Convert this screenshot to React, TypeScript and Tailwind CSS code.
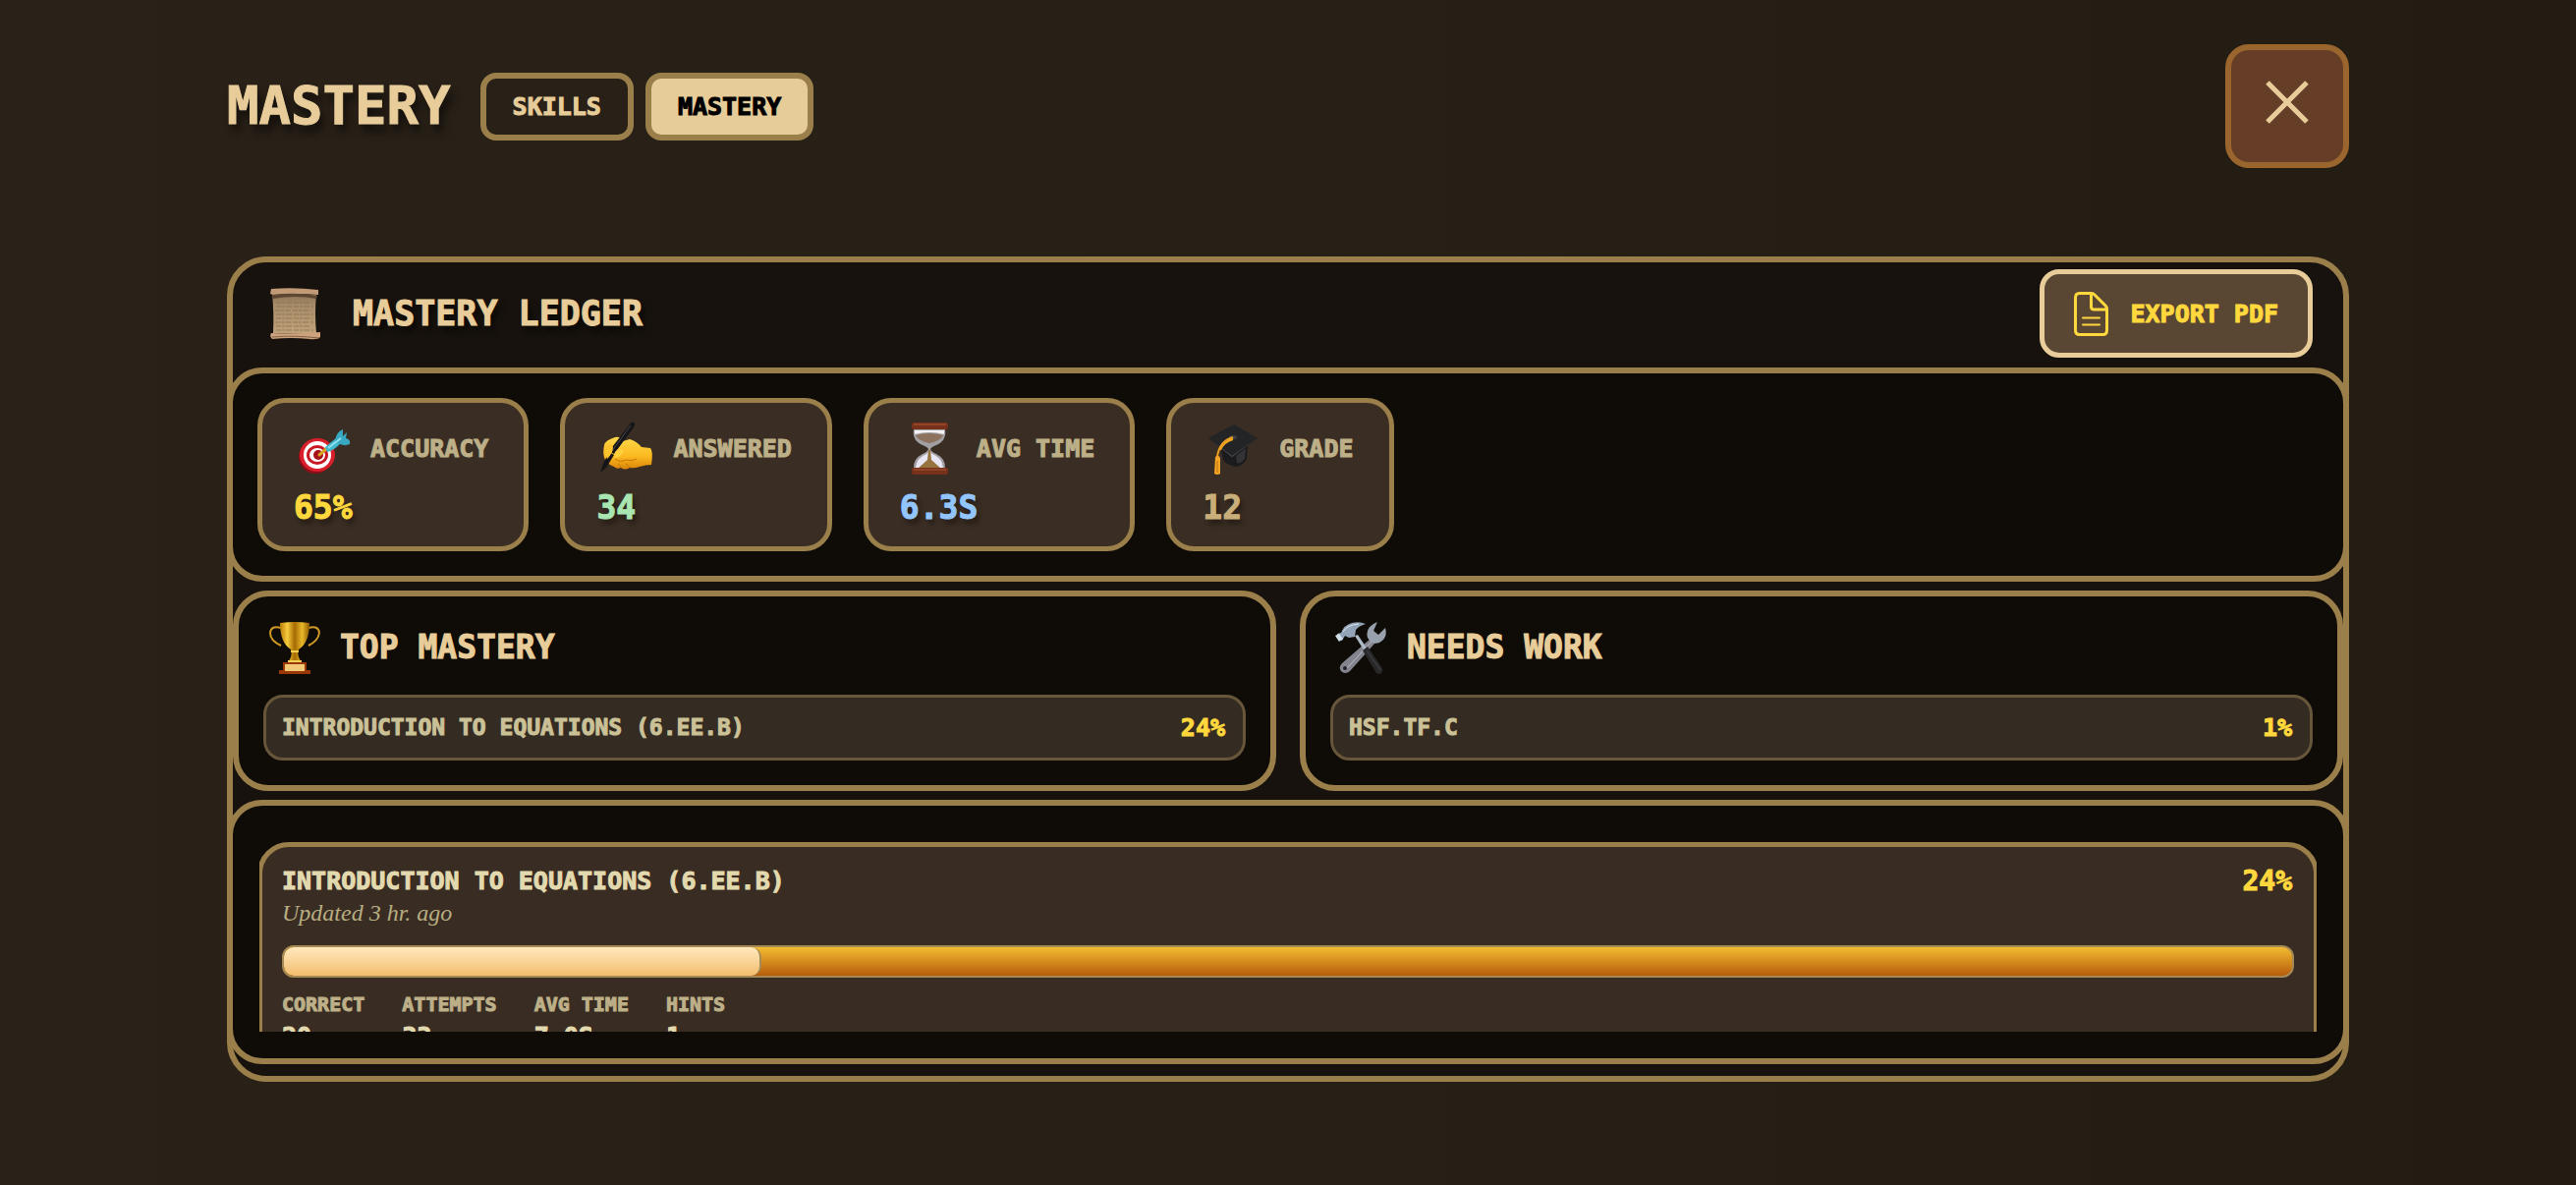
import React, { useState } from 'react';

const pixelFont = "font-['DejaVu_Sans_Mono',monospace] font-bold uppercase [-webkit-text-stroke:1px_currentColor]";
const panel = 'border-[6px] border-[#9b7f4a] bg-[#0f0c08]';

const ScrollIcon = () => (
  <svg viewBox="0 0 58 54" className="h-[54px] w-[58px] shrink-0" aria-hidden="true">
    <defs>
      <linearGradient id="parchment" x1="0" y1="0" x2="0" y2="1">
        <stop offset="0" stopColor="#8d7355" />
        <stop offset="0.3" stopColor="#a88d6a" />
        <stop offset="1" stopColor="#c0a27a" />
      </linearGradient>
    </defs>
    <path d="M6 7 L51 8 Q49 26 51 47 L7 47 Q8 26 6 7Z" fill="url(#parchment)" />
    <path d="M5 2 Q28 0 53 3 V8 Q30 6 7 8 L4 7Z" fill="#c39a76" />
    <path d="M6 8 Q30 5 52 9 L51 12 Q30 8 7 12Z" fill="#5e4732" />
    <path d="M5 47 Q30 48 55 46 V51 Q52 54 44 53 Q25 51 6 53 Q3 50 5 47Z" fill="#cda27c" />
    <path d="M6 51 Q28 49 54 52" stroke="#81614a" fill="none" />
    <g stroke="#7d6547" strokeWidth="1" strokeDasharray="5 1 3 1 6 2" opacity="0.6">
      <path d="M10 16H47M10 20H48M9 24H46M10 28H48M10 32H47M9 36H48M10 40H46M10 44H48" />
    </g>
  </svg>
);

const TargetIcon = () => (
  <svg viewBox="0 0 58 54" className="h-[54px] w-[58px] shrink-0" aria-hidden="true">
    <ellipse cx="22" cy="36" rx="17" ry="17" fill="#8f0d16" />
    <ellipse cx="24" cy="34" rx="18" ry="17" fill="#d81f2b" />
    <ellipse cx="24" cy="34" rx="14" ry="14" fill="#fff" />
    <ellipse cx="24" cy="34" rx="11" ry="10" fill="#c91724" />
    <ellipse cx="24" cy="34" rx="8" ry="7" fill="#fff" />
    <ellipse cx="25" cy="34" rx="5" ry="5" fill="#a51219" />
    <path d="M26 34 L34 27" stroke="#d6a420" strokeWidth="3" strokeLinecap="round" />
    <path d="M32 26 L43 17 L49 20 Q43 29 34 31Z" fill="#3fb7cf" />
    <path d="M42 19 Q44 10 50 8 L50 15 L54 11 L53 17 Q58 18 57 23 Q50 26 43 21Z" fill="#38a9c2" />
    <path d="M35 27 L48 17" stroke="#8fe0ec" strokeWidth="2" />
  </svg>
);

const WritingIcon = () => (
  <svg viewBox="0 0 58 54" className="h-[54px] w-[58px] shrink-0" aria-hidden="true">
    <defs>
      <linearGradient id="hand" x1="0" y1="0" x2="0" y2="1">
        <stop offset="0" stopColor="#ffd84a" />
        <stop offset="0.6" stopColor="#fbb91f" />
        <stop offset="1" stopColor="#d98408" />
      </linearGradient>
    </defs>
    <path
      d="M8 24 Q9 19 19 16 Q25 15 27 20 L34 18 Q41 20 46 26 L55 27 Q58 30 56 44 Q50 44 44 46 Q38 48 34 47 Q29 50 25 47 Q21 49 18 46 Q12 44 9 39 Q6 33 8 24Z"
      fill="url(#hand)"
    />
    <path
      d="M19 38 Q24 42 30 39 Q36 41 41 38 M25 47 Q24 44 22 43 M34 47 Q32 44 30 43"
      fill="none"
      stroke="#c87508"
      strokeWidth="1"
    />
    <path d="M34 3 Q36 -1 39 2 Q39 4 38 6 L18 33 L13 30Z" fill="#151517" />
    <path d="M13 31 L18 34 L10 47 L4 52 L7 43Z" fill="#151517" />
    <path d="M35 4 L16 30" stroke="#4a4a4e" strokeWidth="1" />
    <path d="M9 25 Q15 21 17 26 Q17 32 11 38 Q8 33 9 25Z" fill="#fdc32d" />
    <path d="M19 31 Q24 25 28 30 Q26 36 18 37Z" fill="#ffce3d" />
  </svg>
);

const HourglassIcon = () => (
  <svg viewBox="0 0 58 54" className="h-[54px] w-[58px] shrink-0" aria-hidden="true">
    <path
      d="M14 8 H46 Q48 19 37 24 Q32 26 31 28 Q32 31 37 33 Q47 38 46 48 H14 Q13 38 23 33 Q28 31 29 28 Q28 26 23 24 Q12 19 14 8Z"
      fill="#a19fa3"
    />
    <path d="M15 9 H45 V13 Q30 9 15 13Z" fill="#f4f2f1" />
    <path d="M16 14 Q30 10 44 14 Q41 20 30 22 Q19 20 16 14Z" fill="#8d725d" />
    <path d="M27 33 Q17 37 16 47 H44 Q43 37 33 33 L30 30Z" fill="#e8e6f2" />
    <path d="M29 29 H31 L32 39 L42 48 H18 L28 39Z" fill="#96733f" />
    <rect x="12" y="1" width="37" height="7" rx="2" fill="#773019" />
    <path d="M14 3H47" stroke="#b05b38" strokeWidth="1" />
    <rect x="12" y="47" width="37" height="7" rx="2" fill="#773019" />
    <path d="M14 49H47" stroke="#a95735" strokeWidth="1" />
  </svg>
);

const GradeIcon = () => (
  <svg viewBox="0 0 58 54" className="h-[54px] w-[58px] shrink-0" aria-hidden="true">
    <path d="M19 28 L46 24 L45 38 Q40 46 34 46 Q24 44 21 39Z" fill="#1b1b1d" />
    <path d="M34 35 L44 27 L43 38 Q39 43 35 42Z" fill="#333336" />
    <path d="M6 17 L32 3 L56 17 L30 37Z" fill="#232426" />
    <path d="M6 17 L30 36 L56 17 L30 35Z" fill="#515155" />
    <ellipse cx="31" cy="16" rx="4" ry="2" fill="#3d3e42" />
    <path d="M31 16 Q17 20 15 36 M31 18 Q21 21 18 29" fill="none" stroke="#eba221" strokeWidth="2" />
    <path d="M13 36 Q16 33 18 37 L18 53 Q15 55 12 53Z" fill="#f3a425" />
    <path d="M15 40V52" stroke="#bb7012" strokeWidth="1" />
  </svg>
);

const TrophyIcon = () => (
  <svg viewBox="0 0 58 54" className="h-[54px] w-[58px] shrink-0" aria-hidden="true">
    <defs>
      <linearGradient id="gold" x1="0" y1="0" x2="1" y2="0">
        <stop offset="0" stopColor="#b97c08" />
        <stop offset="0.25" stopColor="#f5cb3c" />
        <stop offset="0.5" stopColor="#a66a02" />
        <stop offset="0.75" stopColor="#e9b82a" />
        <stop offset="1" stopColor="#8d5900" />
      </linearGradient>
    </defs>
    <path
      d="M18 7 Q8 4 7 12 Q7 20 18 25 M46 7 Q56 4 57 12 Q56 20 46 25"
      fill="none"
      stroke="#cf9a22"
      strokeWidth="2"
    />
    <path d="M17 2 Q32 0 47 2 Q47 22 36 29 Q34 34 38 41 H26 Q30 34 28 29 Q17 22 17 2Z" fill="url(#gold)" />
    <path d="M28 31H36M25 41H39" stroke="#f3cf52" strokeWidth="2" />
    <path d="M20 42 H44 V50 H48 V54 H16 V50 H20Z" fill="#993706" />
    <rect x="22" y="44" width="20" height="7" fill="#f2c977" />
  </svg>
);

const ToolsIcon = () => (
  <svg viewBox="0 0 58 54" className="h-[54px] w-[58px] shrink-0" aria-hidden="true">
    <path d="M41 18 L46 22 L20 51 Q15 55 11 51 Q8 47 12 43Z" fill="#83848e" />
    <path d="M42 21 L17 48" stroke="#b9bbc5" strokeWidth="1" />
    <circle cx="15" cy="48" r="2" fill="#222226" />
    <path d="M38 17 Q35 6 48 1 L44 10 L49 14 L56 7 Q59 17 50 22 Q43 25 38 17Z" fill="#98a0ad" />
    <path d="M25 15 L28 14 L38 29 L35 31Z" fill="#aeb9c6" />
    <path d="M33 30 L38 26 L53 48 Q54 53 50 54 L47 53Z" fill="#28282b" />
    <path d="M37 30 L51 50" stroke="#47474c" strokeWidth="1" />
    <path d="M7 13 L11 12 Q14 4 22 2 Q30 0 36 3 Q29 5 26 9 L25 16 L19 17 L15 15 L12 20 L8 19Z" fill="#93a3b8" />
    <path d="M13 11 Q17 4 29 3" stroke="#dbe6ef" strokeWidth="1" fill="none" />
    <path d="M5 15 L9 13 L13 18 L9 21Z" fill="#d2dfe9" />
  </svg>
);

const DocumentIcon = () => (
  <svg
    viewBox="0 0 35 45"
    className="h-[45px] w-[35px] shrink-0"
    fill="none"
    stroke="currentColor"
    strokeLinejoin="round"
    strokeLinecap="round"
    strokeWidth="3"
    aria-hidden="true"
  >
    <path d="M5.5 1.5 H18 Q19.5 1.5 21 3 L32 14 Q33.5 15.5 33.5 17 V39 Q33.5 43.5 29.5 43.5 H5.5 Q1.5 43.5 1.5 39 V6 Q1.5 1.5 5.5 1.5Z" />
    <path d="M17.5 2 V15 Q17.5 18 20.5 18 H33" />
    <path d="M9 26.5 H26 M9 33.5 H26" strokeWidth="2" />
  </svg>
);

const stats = [
  { label: 'Accuracy', value: '65%', color: 'text-[#ffd83d]', Icon: TargetIcon },
  { label: 'Answered', value: '34', color: 'text-[#a9e5b1]', Icon: WritingIcon },
  { label: 'Avg Time', value: '6.3s', color: 'text-[#93c5fd]', Icon: HourglassIcon },
  { label: 'Grade', value: '12', color: 'text-[#c9ae79]', Icon: GradeIcon },
];

const highlights = [
  { title: 'Top Mastery', skill: 'Introduction to Equations (6.EE.B)', score: '24%', Icon: TrophyIcon },
  { title: 'Needs Work', skill: 'HSF.TF.C', score: '1%', Icon: ToolsIcon },
];

const skill = {
  name: 'Introduction to Equations (6.EE.B)',
  updated: 'Updated 3 hr. ago',
  score: '24%',
  progress: 23.8,
  details: [
    { label: 'Correct', value: '20' },
    { label: 'Attempts', value: '33' },
    { label: 'Avg Time', value: '7.0s' },
    { label: 'Hints', value: '1' },
  ],
};

const tabs = ['Skills', 'Mastery'];

const App = () => {
  const [activeTab, setActiveTab] = useState('Mastery');

  return (
    <div className="min-h-screen bg-linear-to-r from-[#2a2118] via-[#262016] to-[#231c12] px-6 pt-[45px] pb-[105px]">
      <div className="mx-auto max-w-[2160px]">
        <header className="flex items-center justify-between">
          <div className="flex items-center">
            <h1
              className={`${pixelFont} mr-[30px] text-[54px] leading-[64px] text-[#e8cd9a] [text-shadow:4px_8px_8px_rgba(0,0,0,0.6)]`}
            >
              Mastery
            </h1>
            <nav className="flex gap-3">
              {tabs.map((tab) => (
                <button
                  key={tab}
                  type="button"
                  onClick={() => setActiveTab(tab)}
                  className={`${pixelFont} rounded-2xl border-[6px] border-[#9b7f4a] px-[27px] py-3 text-[25px] leading-[33px] ${
                    activeTab === tab ? 'bg-[#e6cc98] text-black' : 'text-[#e6cc98]'
                  }`}
                >
                  {tab}
                </button>
              ))}
            </nav>
          </div>
          <button
            type="button"
            aria-label="Close"
            className="flex size-[126px] items-center justify-center rounded-3xl border-[6px] border-[#9a662e] bg-[#663d26] pb-2 text-[#e8cd9a]"
          >
            <svg viewBox="0 0 44 44" className="size-11" stroke="currentColor" strokeWidth="5" aria-hidden="true">
              <path d="M2 2 L42 42 M42 2 L2 42" />
            </svg>
          </button>
        </header>

        <main className="mt-[90px] rounded-[40px] border-[6px] border-[#9b7f4a] bg-[#17120d] pb-3">
          <div className="flex items-center justify-between pt-[7px] pr-[31px] pb-[10px] pl-[34px]">
            <div className="flex items-center gap-[30px]">
              <ScrollIcon />
              <h2
                className={`${pixelFont} text-[35px] leading-[44px] text-[#e8cd9a] [text-shadow:4px_6px_6px_rgba(0,0,0,0.6)]`}
              >
                Mastery Ledger
              </h2>
            </div>
            <button
              type="button"
              className={`${pixelFont} flex h-[90px] items-center gap-[22px] rounded-[20px] border-[5px] border-[#e8cd9a] bg-[#594734] px-[30px] text-[25px] leading-[33px] text-[#ffd83d]`}
            >
              <DocumentIcon />
              Export PDF
            </button>
          </div>

          <section className={`${panel} -mx-[6px] flex flex-wrap gap-8 rounded-[36px] p-[25px]`}>
            {stats.map(({ label, value, color, Icon }) => (
              <div
                key={label}
                className="rounded-[28px] border-[5px] border-[#9b7f4a] bg-[#3a2d23] py-[19px] pr-9 pl-8"
              >
                <div className="flex items-center gap-5">
                  <Icon />
                  <p className={`${pixelFont} text-[25px] leading-[33px] text-[#bdb088]`}>{label}</p>
                </div>
                <p
                  className={`${pixelFont} mt-[14px] text-[33px] leading-[40px] [text-shadow:3px_5px_5px_rgba(0,0,0,0.4)] ${color}`}
                >
                  {value}
                </p>
              </div>
            ))}
          </section>

          <div className="mt-[9px] grid grid-cols-2 gap-6">
            {highlights.map(({ title, skill: name, score, Icon }) => (
              <section key={title} className={`${panel} rounded-[36px] p-[25px]`}>
                <div className="flex items-center gap-5">
                  <Icon />
                  <h3 className={`${pixelFont} text-[33px] leading-[40px] text-[#e8cd9a]`}>{title}</h3>
                </div>
                <div
                  className={`${pixelFont} mt-[21px] flex items-center justify-between rounded-[20px] border-[3px] border-[#67563a] bg-[#342b22] px-4 py-[14px] text-[23px] leading-[33px]`}
                >
                  <span className="text-[#cbc197]">{name}</span>
                  <span className="pr-0.5 text-[25px] text-[#ffd83d]">{score}</span>
                </div>
              </section>
            ))}
          </div>

          <section className={`${panel} -mx-[6px] mt-[9px] rounded-[36px] p-[27px]`}>
            <div className="h-[203px] overflow-x-hidden overflow-y-auto pt-[10px] [scrollbar-width:none]">
              <article className="-mx-[2px] rounded-[32px] border-[5px] border-[#9b7f4a] bg-[#382c23] px-5 py-5">
                <div className={`${pixelFont} flex items-center justify-between text-[25px] leading-[30px]`}>
                  <h4 className="text-[#e3d9ae]">{skill.name}</h4>
                  <span className="pr-0.5 text-[28px] text-[#ffd83d]">{skill.score}</span>
                </div>
                <p className="mt-0.5 font-['Liberation_Serif',serif] text-[24px] leading-[30px] text-[#b9ad82] italic">
                  {skill.updated}
                </p>
                <div className="mt-[18px] h-[33px] overflow-hidden rounded-xl border-2 border-[#a58a55] bg-linear-to-b from-[#f3bc31] to-[#b55c09]">
                  <div
                    className="h-full rounded-[10px] border-r-2 border-[#a58a55] bg-linear-to-b from-[#ffe8bc] to-[#f3be6e]"
                    style={{ width: `${skill.progress}%` }}
                  />
                </div>
                <dl className={`${pixelFont} mt-[15px] flex gap-[38px]`}>
                  {skill.details.map(({ label, value }) => (
                    <div key={label}>
                      <dt className="text-[20px] leading-[24px] text-[#bdb088]">{label}</dt>
                      <dd className="mt-[6px] text-[25px] leading-[30px] text-[#e3d9ae]">{value}</dd>
                    </div>
                  ))}
                </dl>
              </article>
            </div>
          </section>
        </main>
      </div>
    </div>
  );
};

export default App;
